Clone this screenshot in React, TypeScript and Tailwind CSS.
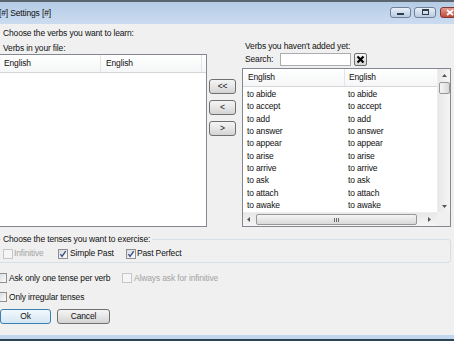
import React from "react";

const verbs = [
  "to abide",
  "to accept",
  "to add",
  "to answer",
  "to appear",
  "to arise",
  "to arrive",
  "to ask",
  "to attach",
  "to awake",
];

function Check({ checked = false, disabled = false }: { checked?: boolean; disabled?: boolean }) {
  return (
    <span
      className={
        disabled
          ? "w-[10px] h-[10px] shrink-0 border border-[#c6c6c6] bg-[#f5f5f5]"
          : "w-[10px] h-[10px] shrink-0 border border-[#8e8f8f] bg-gradient-to-br from-[#d6dadf] to-[#fbfbfb] flex items-center justify-center"
      }
    >
      {checked && (
        <svg width="8" height="8" viewBox="0 0 8 8">
          <path d="M1.4 4.1 L3.1 6.4 L6.7 1.2" fill="none" stroke="#3a4f86" strokeWidth="1.4" />
        </svg>
      )}
    </span>
  );
}

function SmallBtn({ children }: { children: React.ReactNode }) {
  return (
    <div className="w-[27px] h-[15px] shrink-0 border border-[#707070] rounded-[3px] bg-gradient-to-b from-[#f4f4f4] via-[#e6e6e6] to-[#d3d3d3] flex items-center justify-center leading-none">
      {children}
    </div>
  );
}

function ListHeaderRight() {
  return (
    <div className="h-[18px] flex border-b border-[#d5d5d5] bg-gradient-to-b from-white to-[#f5f6f7]">
      <div className="w-[101px] shrink-0 pl-[5px] flex items-center">English</div>
      <div className="flex-1 pl-[4px] flex items-center border-l border-[#e3e4e6]">English</div>
    </div>
  );
}

export default function App() {
  return (
    <div className="w-[454px] h-[341px] overflow-hidden bg-[#f0f0f0] flex flex-col text-[#111] text-[8.5px] tracking-[-0.15px] leading-none font-['Liberation_Sans',Arial,sans-serif]">
      {/* Title bar */}
      <div className="h-[24px] shrink-0 flex items-center border-t-2 border-[#5a6570] bg-gradient-to-b from-[#b5cce5] to-[#cbdcf0]">
        <span className="flex-1 min-w-0 -ml-[1px] whitespace-nowrap">[#] Settings [#]</span>
        <div className="flex items-center shrink-0 -mr-[22px] -mt-[2px]">
          <div className="w-[21px] h-[11px] border border-[#6f8097] rounded-[3px] bg-gradient-to-b from-[#e8eff8] to-[#b9cbe1] flex items-end justify-center pb-[2px]">
            <span className="w-[7px] h-[2px] bg-[#2f3c4e]"></span>
          </div>
          <div className="ml-[3px] w-[22px] h-[11px] border border-[#6f8097] rounded-[3px] bg-gradient-to-b from-[#e8eff8] to-[#b9cbe1] flex items-center justify-center">
            <span className="w-[7px] h-[6px] border border-[#2f3c4e] border-t-2"></span>
          </div>
          <div className="ml-[4px] w-[36px] h-[11px] border border-[#7d3b35] rounded-[3px] bg-gradient-to-b from-[#e49a8e] to-[#c2473a] flex items-center justify-start pl-[5px]">
            <svg width="8" height="7" viewBox="0 0 8 7">
              <path d="M1 1 L7 6 M7 1 L1 6" stroke="#ffffff" strokeWidth="1.8" />
            </svg>
          </div>
        </div>
      </div>

      {/* Content */}
      <div className="flex-1 flex flex-col min-h-0">
        <div className="h-[203px] shrink-0 flex">
          {/* Left column */}
          <div className="w-[208px] shrink-0 -ml-px flex flex-col pt-[3px]">
            <div className="h-[12px] leading-[12px] pl-[4px] whitespace-nowrap">Choose the verbs you want to learn:</div>
            <div className="mt-[3px] h-[12px] leading-[12px] pl-[4px] whitespace-nowrap">Verbs in your file:</div>
            <div className="h-[173px] border border-[#828790] bg-white">
              <div className="h-[18px] flex border-b border-[#d5d5d5] bg-gradient-to-b from-white to-[#f5f6f7]">
                <div className="w-[100px] shrink-0 pl-[4px] flex items-center">English</div>
                <div className="w-[101px] shrink-0 pl-[5px] flex items-center border-l border-[#e3e4e6]">English</div>
                <div className="flex-1 border-l border-[#e3e4e6]"></div>
              </div>
            </div>
          </div>

          {/* Middle buttons */}
          <div className="ml-[2px] w-[27px] shrink-0 flex flex-col gap-[6px] pt-[55px]">
            <SmallBtn>&lt;&lt;</SmallBtn>
            <SmallBtn>&lt;</SmallBtn>
            <SmallBtn>&gt;</SmallBtn>
          </div>

          {/* Right column */}
          <div className="ml-[6px] w-[209px] shrink-0 flex flex-col pt-[17px]">
            <div className="h-[11px] leading-[11px] pl-[3px] whitespace-nowrap">Verbs you haven't added yet:</div>
            <div className="h-[14px] flex items-center">
              <span className="w-[38px] shrink-0 pl-[3px]">Search:</span>
              <div className="w-[71px] h-[13px] border border-[#abadb3] bg-white"></div>
              <div className="ml-[3px] w-[13px] h-[13px] border border-[#707070] rounded-[2px] bg-gradient-to-b from-[#f6f6f6] to-[#d6d6d6] flex items-center justify-center">
                <svg width="9" height="9" viewBox="0 0 9 9">
                  <path d="M1.5 1.5 L7.5 7.5 M7.5 1.5 L1.5 7.5" stroke="#000" strokeWidth="2.2" />
                </svg>
              </div>
            </div>
            <div className="mt-[2px] h-[159px] border border-[#828790] bg-white flex flex-col">
              <div className="flex-1 flex min-h-0">
                <div className="flex-1 min-w-0 overflow-hidden">
                  <ListHeaderRight />
                  <div className="pt-[1px]">
                    {verbs.map((v) => (
                      <div key={v} className="h-[12.33px] leading-[12.33px] flex whitespace-nowrap">
                        <div className="w-[101px] shrink-0 pl-[4px]">{v}</div>
                        <div className="flex-1 pl-[4px]">{v}</div>
                      </div>
                    ))}
                  </div>
                </div>
                {/* Vertical scrollbar */}
                <div className="w-[13px] shrink-0 flex flex-col items-center bg-gradient-to-r from-[#e8e8e8] to-[#f5f5f5] border-l border-[#eeeeee]">
                  <div className="h-[13px] flex items-center justify-center">
                    <svg width="5" height="3" viewBox="0 0 5 3">
                      <path d="M0 3 L2.5 0 L5 3 Z" fill="#555" />
                    </svg>
                  </div>
                  <div className="w-[11px] h-[12px] rounded-[2px] border border-[#979797] bg-gradient-to-r from-[#f5f5f5] to-[#d9d9d9]"></div>
                  <div className="flex-1"></div>
                  <div className="h-[12px] flex items-center justify-center">
                    <svg width="5" height="3" viewBox="0 0 5 3">
                      <path d="M0 0 L2.5 3 L5 0 Z" fill="#555" />
                    </svg>
                  </div>
                </div>
              </div>
              {/* Horizontal scrollbar */}
              <div className="h-[14px] shrink-0 flex">
                <div className="flex-1 flex items-center bg-gradient-to-b from-[#e8e8e8] to-[#f5f5f5] border-t border-[#eeeeee]">
                  <div className="w-[11px] shrink-0 flex justify-center">
                    <svg width="3" height="5" viewBox="0 0 3 5">
                      <path d="M3 0 L0 2.5 L3 5 Z" fill="#555" />
                    </svg>
                  </div>
                  <div className="ml-[2px] w-[161px] h-[11px] shrink-0 rounded-[2px] border border-[#979797] bg-gradient-to-b from-[#f5f5f5] to-[#d9d9d9] flex items-center justify-center gap-[1px]">
                    <span className="w-px h-[4px] bg-[#6a6a6a]"></span>
                    <span className="w-px h-[4px] bg-[#6a6a6a]"></span>
                    <span className="w-px h-[4px] bg-[#6a6a6a]"></span>
                  </div>
                  <div className="flex-1 flex justify-center pl-[4px]">
                    <svg width="3" height="5" viewBox="0 0 3 5">
                      <path d="M0 0 L3 2.5 L0 5 Z" fill="#555" />
                    </svg>
                  </div>
                </div>
                <div className="w-[13px] shrink-0 bg-[#f0f0f0]"></div>
              </div>
            </div>
          </div>
        </div>

        {/* Tenses group */}
        <fieldset className="mt-[6px] -ml-[4px] w-[455px] shrink-0 self-start border border-[#d5dfe5] rounded-[3px] pl-[6px]">
          <legend className="-ml-[2px] px-[2px] h-[12px] leading-[12px] whitespace-nowrap">
            Choose the tenses you want to exercise:
          </legend>
          <div className="h-[17px] flex items-center">
            <div className="w-[55px] shrink-0 flex items-center gap-[1px]">
              <Check disabled />
              <span className="text-[#a3a3a3]">Infinitive</span>
            </div>
            <div className="w-[68px] shrink-0 flex items-center gap-[2px]">
              <Check checked />
              <span>Simple Past</span>
            </div>
            <div className="flex items-center gap-[1px]">
              <Check checked />
              <span>Past Perfect</span>
            </div>
          </div>
        </fieldset>

        <div className="mt-[9px] h-[12px] -ml-[3px] flex items-center">
          <div className="w-[125px] shrink-0 flex items-center gap-[2px]">
            <Check />
            <span className="whitespace-nowrap">Ask only one tense per verb</span>
          </div>
          <div className="flex items-center gap-[2px]">
            <Check disabled />
            <span className="text-[#a3a3a3] whitespace-nowrap">Always ask for infinitive</span>
          </div>
        </div>

        <div className="mt-[7px] h-[12px] -ml-[3px] flex items-center gap-[2px]">
          <Check />
          <span className="whitespace-nowrap">Only irregular tenses</span>
        </div>

        <div className="mt-[6px] flex gap-[6px]">
          <div className="w-[51px] h-[15px] border border-[#3c7fb1] rounded-[3px] bg-gradient-to-b from-[#f2f8fc] via-[#e4f0f8] to-[#d2e6f3] flex items-center justify-center">
            Ok
          </div>
          <div className="w-[53px] h-[15px] border border-[#707070] rounded-[3px] bg-gradient-to-b from-[#f4f4f4] via-[#e6e6e6] to-[#d3d3d3] flex items-center justify-center">
            Cancel
          </div>
        </div>
        <div className="flex-1"></div>
      </div>

      {/* Bottom window border */}
      <div className="h-[4px] shrink-0 bg-[#c2d7ee]"></div>
      <div className="h-[2px] shrink-0 bg-[#2e4452]"></div>
    </div>
  );
}
